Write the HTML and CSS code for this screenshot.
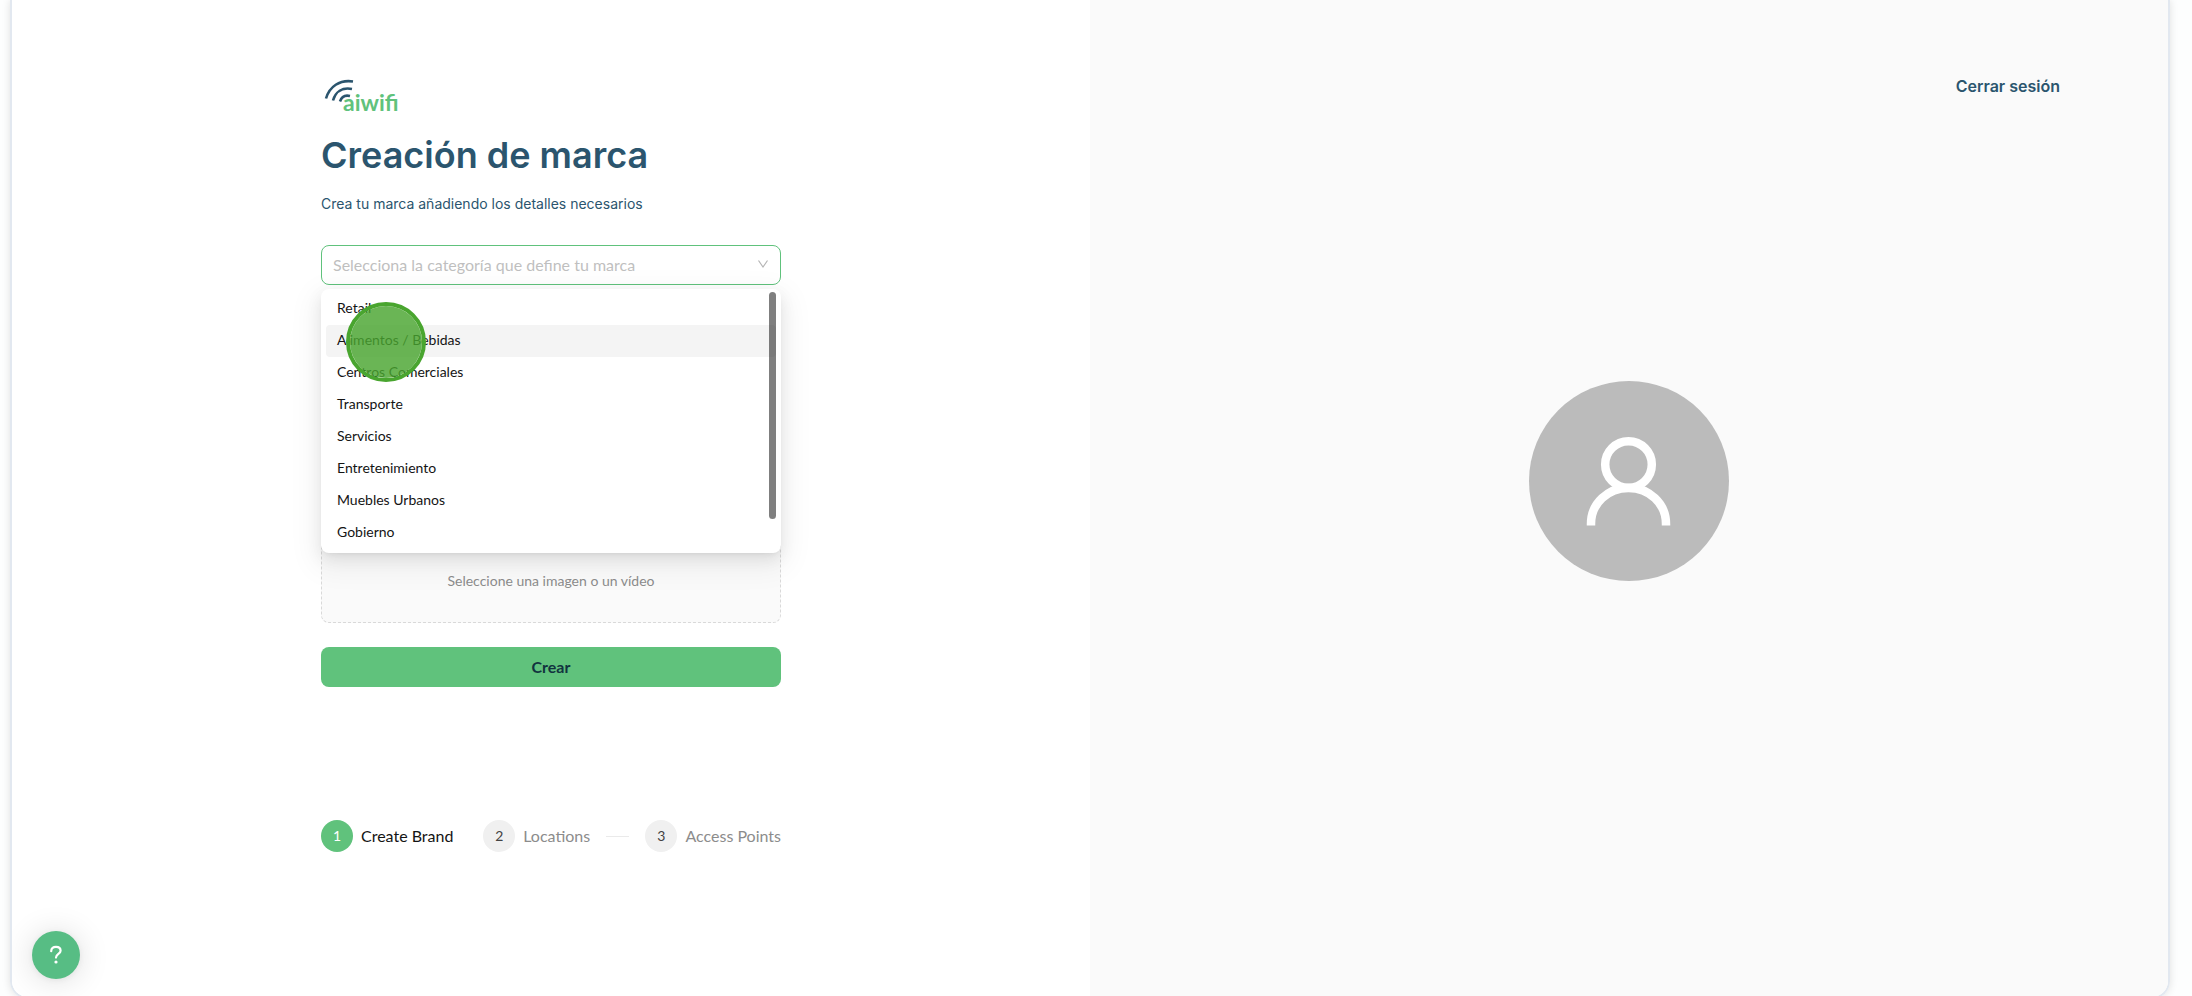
FILE: index.html
```html
<!DOCTYPE html>
<html lang="es">
<head>
<meta charset="utf-8">
<title>Creación de marca</title>
<link rel="stylesheet" href="styles.css">
</head>
<body>
<div class="frame">
  <main class="form-panel">
    <form class="form">
      <svg class="logo" viewBox="0 0 84 40" role="img" aria-label="aiwifi">
        <g fill="none" stroke="#2b556e" stroke-width="2.6">
          <path d="M5 23.500C8.500 11.500 18.500 4.500 32 6.500"/>
          <path d="M12 25.500C14.500 17 21 12 31 14"/>
          <path d="M19 26.500C20.500 22 24 19.800 29 21"/>
        </g>
        <text class="logo-text" x="22" y="36">aiwifi</text>
      </svg>
      <h1 class="title">Creación de marca</h1>
      <p class="subtitle">Crea tu marca añadiendo los detalles necesarios</p>
      <div class="picker">
        <button type="button" class="select" aria-haspopup="listbox" aria-expanded="true">
          <span>Selecciona la categoría que define tu marca</span>
          <svg class="arrow" viewBox="0 0 12 12"><path d="M1.500 2.500L6 9L10.500 2.500" fill="none" stroke="#b5b5b5" stroke-width="1.200"/></svg>
        </button>
        <div class="dropdown">
          <ul class="options" role="listbox" aria-label="Categoría">
            <li class="option" role="option">Retail</li>
            <li class="option active" role="option">Alimentos / Bebidas</li>
            <li class="option" role="option">Centros Comerciales</li>
            <li class="option" role="option">Transporte</li>
            <li class="option" role="option">Servicios</li>
            <li class="option" role="option">Entretenimiento</li>
            <li class="option" role="option">Muebles Urbanos</li>
            <li class="option" role="option">Gobierno</li>
          </ul>
          <span class="thumb"></span>
          <span class="pointer"></span>
        </div>
      </div>
      <button type="button" class="upload">Seleccione una imagen o un vídeo</button>
      <button type="submit" class="submit">Crear</button>
      <ol class="steps">
        <li class="step current"><span class="num">1</span><span class="step-title">Create Brand</span></li>
        <li class="step lined"><span class="num">2</span><span class="step-title">Locations</span></li>
        <li class="step"><span class="num">3</span><span class="step-title">Access Points</span></li>
      </ol>
    </form>
    <button type="button" class="help" aria-label="Ayuda">
      <svg viewBox="0 0 24 24" width="24" height="24" fill="none" stroke="#fff" stroke-width="2.200" stroke-linecap="round"><path d="M7.200 8.200C7.200 5 9.300 3.800 12 3.800C14.700 3.800 16.600 5.400 16.600 7.800C16.600 11 12 11 12 14.600"/><circle cx="12" cy="19" r="1.600" fill="#fff" stroke="none"/></svg>
    </button>
  </main>
  <aside class="preview">
    <a class="logout" href="#">Cerrar sesión</a>
    <div class="avatar">
      <svg viewBox="0 0 200 200" fill="none" stroke="#fff" stroke-width="8.500"><circle cx="99.500" cy="83.500" r="23.300"/><path d="M62 144.500V143C62 122 79 107 99.500 107S137 122 137 143V144.500"/></svg>
    </div>
  </aside>
</div>
</body>
</html>
```
FILE: styles.css
```css
* { box-sizing: border-box; }
body {
  margin: 0;
  height: 100vh;
  overflow: hidden;
  background: #fdfefe;
  font-family: Lato, sans-serif;
  color: #141414;
}
button { font: inherit; cursor: pointer; }
.frame {
  display: grid;
  grid-template-columns: 1fr 1fr;
  height: calc(100vh + 3px);
  margin: 0 22px 0 10px;
  border: 2px solid #e2e8f0;
  border-top: 0;
  border-radius: 0 0 18px 18px;
  overflow: hidden;
  box-shadow: 0 0 8px rgba(0, 0, 0, 0.12);
}
.form-panel {
  position: relative;
  display: flex;
  justify-content: center;
  background: #fff;
}
.form {
  display: flex;
  flex-direction: column;
  width: 460px;
  padding-top: 75px;
}
.logo { width: 84px; height: 40px; }
.logo-text { font: 700 23px Lato, sans-serif; fill: #60c27c; }
.title {
  margin: 16px 0 0;
  font: 600 36px/48px Inter, sans-serif;
  color: #2b556e;
}
.subtitle {
  margin: 16px 0 32px;
  font: 400 14px/18px Inter, sans-serif;
  color: #2b556e;
}
.picker { position: relative; }
.select {
  display: flex;
  align-items: center;
  justify-content: space-between;
  width: 100%;
  height: 40px;
  padding: 0 11px 2px;
  border: 1px solid #60c27c;
  border-radius: 8px;
  background: #fff;
  font-size: 16px;
  color: #bfbfbf;
}
.arrow { width: 12px; height: 12px; }
.dropdown {
  position: absolute;
  top: 44px;
  left: 0;
  right: 0;
  padding: 4px 5px;
  border-radius: 8px;
  background: #fff;
  box-shadow: 0 6px 16px rgba(0, 0, 0, 0.08), 0 3px 6px -4px rgba(0, 0, 0, 0.12), 0 9px 28px 8px rgba(0, 0, 0, 0.05);
}
.options { margin: 0; padding: 0; list-style: none; }
.option {
  padding: 4px 11px 6px;
  border-radius: 4px;
  font-size: 14px;
  line-height: 22px;
}
.active { background: #f4f4f4; }
.thumb {
  position: absolute;
  top: 3px;
  right: 5px;
  width: 7px;
  height: 227px;
  border-radius: 4px;
  background: rgba(0, 0, 0, 0.5);
}
.pointer {
  position: absolute;
  top: 13px;
  left: 25px;
  width: 80px;
  height: 80px;
  border: 4px solid #49a52f;
  border-radius: 50%;
  background: rgba(73, 165, 47, 0.82);
  background-clip: padding-box;
}
.upload {
  height: 120px;
  margin: 218px 0 24px;
  padding: 34px 0 0;
  border: 1px dashed #d9d9d9;
  border-radius: 8px;
  background: #fafafa;
  font-size: 14px;
  color: #8c8c8c;
}
.submit {
  height: 40px;
  padding: 0 0 2px;
  border: 0;
  border-radius: 8px;
  background: #60c27c;
  font-size: 16px;
  font-weight: 700;
  color: #12343f;
}
.steps {
  display: flex;
  margin: 133px 0 0;
  padding: 0;
  list-style: none;
}
.step {
  display: flex;
  flex: 1 1 0;
  align-items: center;
  gap: 8px;
  font-size: 16px;
  line-height: 32px;
  color: #8c8c8c;
  white-space: nowrap;
}
.step:last-child { flex: none; }
.lined::after {
  content: "";
  flex: 1;
  height: 1px;
  margin: 0 16px 0 8px;
  background: #eaeaea;
}
.num {
  width: 32px;
  height: 32px;
  border-radius: 50%;
  background: #f0f0f0;
  font-size: 14px;
  text-align: center;
  color: #434343;
}
.current { color: #141414; }
.current .num { background: #60c27c; color: #fff; }
.help {
  position: absolute;
  left: 20px;
  bottom: 18px;
  display: grid;
  place-items: center;
  width: 48px;
  height: 48px;
  padding: 0;
  border: 0;
  border-radius: 50%;
  background: #57bd84;
  box-shadow: 0 2px 32px rgba(0, 0, 0, 0.14), 0 1px 6px rgba(0, 0, 0, 0.06);
}
.preview {
  display: flex;
  flex-direction: column;
  align-items: center;
  padding-bottom: 132px;
  background: #fafafa;
}
.logout {
  align-self: flex-end;
  margin: 76px 108px 0 0;
  font: 600 16px/20px Inter, sans-serif;
  color: #2b556e;
  text-decoration: none;
}
.avatar {
  width: 200px;
  height: 200px;
  margin: auto;
  border-radius: 50%;
  background: #bbb;
}
```
